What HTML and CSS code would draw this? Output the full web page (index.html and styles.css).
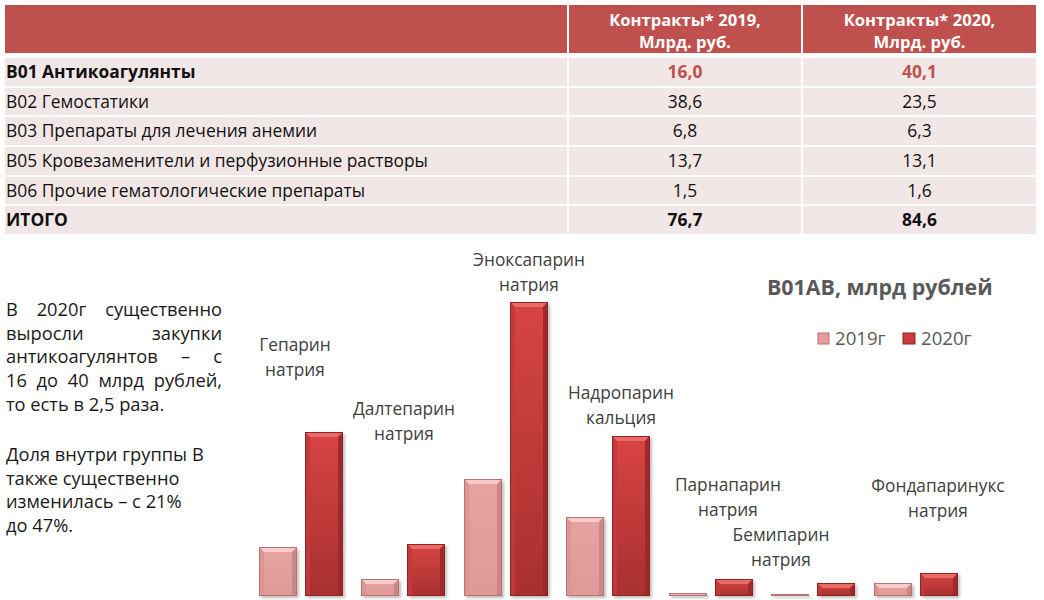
FILE: index.html
```html
<!DOCTYPE html>
<html lang="ru">
<head>
<meta charset="utf-8">
<title>B01</title>
<link rel="stylesheet" href="styles.css">
</head>
<body>
<div class="page">
  <div class="table">
    <div class="hcell"></div>
    <div class="hcell hnum">Контракты* 2019,<br>Млрд. руб.</div>
    <div class="hcell hnum">Контракты* 2020,<br>Млрд. руб.</div>

    <div class="cell name bold">B01 Антикоагулянты</div>
    <div class="cell num bold red">16,0</div>
    <div class="cell num bold red">40,1</div>

    <div class="cell name">B02 Гемостатики</div>
    <div class="cell num">38,6</div>
    <div class="cell num">23,5</div>

    <div class="cell name">B03 Препараты для лечения анемии</div>
    <div class="cell num">6,8</div>
    <div class="cell num">6,3</div>

    <div class="cell name">B05 Кровезаменители и перфузионные растворы</div>
    <div class="cell num">13,7</div>
    <div class="cell num">13,1</div>

    <div class="cell name">B06 Прочие гематологические препараты</div>
    <div class="cell num">1,5</div>
    <div class="cell num">1,6</div>

    <div class="cell name bold">ИТОГО</div>
    <div class="cell num bold">76,7</div>
    <div class="cell num bold">84,6</div>
  </div>

  <div class="lower">
    <div class="note">
      <p class="just">
        <span class="ln">В 2020г существенно</span>
        <span class="ln">выросли закупки</span>
        <span class="ln">антикоагулянтов – с</span>
        <span class="ln">16 до 40 млрд рублей,</span>
        <span class="ln last">то есть в 2,5 раза.</span>
      </p>
      <p>Доля внутри группы В<br>также существенно<br>изменилась – с 21%<br>до 47%.</p>
    </div>
    <svg class="chart" width="812" height="360" viewBox="0 0 812 360">
      <defs>
        <linearGradient id="gDark" x1="0" y1="0" x2="0" y2="1">
          <stop offset="0" stop-color="#d84444"/>
          <stop offset="1" stop-color="#a83030"/>
        </linearGradient>
        <linearGradient id="gLight" x1="0" y1="0" x2="0" y2="1">
          <stop offset="0" stop-color="#e5a3a2"/>
          <stop offset="1" stop-color="#df9998"/>
        </linearGradient>
        <filter id="sh" x="-30%" y="-10%" width="160%" height="130%">
          <feGaussianBlur stdDeviation="1.6"/>
        </filter>
      </defs>
      <g transform="translate(-232,-240)">
        <text class="title" x="767" y="295">B01AB, млрд рублей</text>

        <rect x="818" y="333" width="11" height="11" fill="#e29d9c" stroke="#b87070" stroke-width="1"/>
        <text class="legend" x="835" y="345">2019г</text>
        <rect x="903" y="333" width="12" height="11" fill="#c83c3c" stroke="#8e2424" stroke-width="1"/>
        <text class="legend" x="921" y="345">2020г</text>

        <g class="labels">
          <text x="295" y="351">Гепарин</text><text x="295" y="376">натрия</text>
          <text x="404" y="415">Далтепарин</text><text x="404" y="440">натрия</text>
          <text x="529" y="266">Эноксапарин</text><text x="529" y="291">натрия</text>
          <text x="621" y="399">Надропарин</text><text x="621" y="424">кальция</text>
          <text x="728" y="491">Парнапарин</text><text x="728" y="516">натрия</text>
          <text x="781" y="541">Бемипарин</text><text x="781" y="566">натрия</text>
          <text x="938" y="492">Фондапаринукс</text><text x="938" y="517">натрия</text>
        </g>

        <g id="bars"></g>
      </g>
    </svg>
  </div>
</div>
<script src="chart.js"></script>
</body>
</html>
```

FILE: chart.js
```js
(function () {
  var NS = "http://www.w3.org/2000/svg";
  var g = document.getElementById("bars");
  var bottom = 596;
  var bars = [
    [259, 547, 0], [305, 432, 1],
    [361, 579, 0], [407, 544, 1],
    [464, 479, 0], [510, 302, 1],
    [566, 517, 0], [612, 436, 1],
    [669, 593, 0], [715, 579, 1],
    [771, 594, 0], [817, 583, 1],
    [874, 583, 0], [920, 573, 1]
  ];
  function el(name, attrs) {
    var e = document.createElementNS(NS, name);
    for (var k in attrs) e.setAttribute(k, attrs[k]);
    g.appendChild(e);
    return e;
  }
  bars.forEach(function (b) {
    var x = b[0], y = b[1], w = 38, h = bottom - y, dark = b[2];
    var bv = Math.min(5, h / 2);
    el("rect", { x: x + 2, y: y + 2, width: w, height: h, fill: "#000", opacity: 0.25, filter: "url(#sh)" });
    el("rect", { x: x, y: y, width: w, height: h, fill: dark ? "url(#gDark)" : "url(#gLight)" });
    el("polygon", {
      points: [x, y, x + w, y, x + w - bv, y + bv, x + bv, y + bv].join(" "),
      fill: dark ? "#ea6a68" : "#f6cbca"
    });
    el("polygon", {
      points: [x, y, x + bv, y + bv, x + bv, bottom, x, bottom].join(" "),
      fill: dark ? "#c23a3a" : "#dc9493", opacity: 0.9
    });
    el("polygon", {
      points: [x + w, y, x + w - bv, y + bv, x + w - bv, bottom, x + w, bottom].join(" "),
      fill: dark ? "#9a2828" : "#c98584", opacity: 0.9
    });
    el("rect", { x: x + 0.5, y: y + 0.5, width: w - 1, height: h - 1, fill: "none",
      stroke: dark ? "#8e2424" : "#b87474", "stroke-width": 1 });
  });
})();
```

FILE: styles.css
```css
html, body {
  margin: 0;
  padding: 0;
  background: #ffffff;
}
body {
  font-family: "Open Sans", "Liberation Sans", sans-serif;
  color: #111;
  width: 1044px;
  height: 600px;
  overflow: hidden;
}
.page {
  padding: 5px 0 0 5px;
}
.table {
  display: grid;
  grid-template-columns: 562px 232px 233px;
  grid-template-rows: 51px repeat(6, 27.7px);
  column-gap: 2px;
  row-gap: 2px;
  width: 1031px;
}
.hcell {
  background: #c0504d;
  color: #fff;
  font-weight: 700;
  font-size: 16.6px;
  line-height: 22px;
  height: 48px;
  align-self: start;
}
.hnum {
  text-align: center;
  padding-top: 4px;
  box-sizing: border-box;
}
.cell {
  background: #f2e7e7;
  font-size: 17.4px;
  line-height: 27.7px;
  white-space: nowrap;
}
.name { padding-left: 1px; }
.num { text-align: center; }
.bold { font-weight: 700; }
.red { color: #c0504d; }

.lower {
  display: flex;
  margin-top: 6px;
  margin-left: -5px;
}
.note {
  width: 216px;
  margin-left: 6px;
  padding-top: 57px;
  font-size: 18.3px;
  line-height: 23.6px;
  color: #1a1a1a;
  flex: none;
}
.note p {
  margin: 0 0 27px 0;
}
.note .ln {
  display: block;
  text-align: justify;
  text-align-last: justify;
  white-space: nowrap;
}
.note .ln.last {
  text-align-last: left;
}
.chart {
  flex: none;
  margin-left: 10px;
  display: block;
}
.chart .labels text {
  font-family: "Open Sans", "Liberation Sans", sans-serif;
  font-size: 17.3px;
  fill: #404040;
  text-anchor: middle;
}
.chart .title {
  font-family: "Open Sans", "Liberation Sans", sans-serif;
  font-size: 21.4px;
  font-weight: 700;
  fill: #595959;
}
.chart .legend {
  font-family: "Open Sans", "Liberation Sans", sans-serif;
  font-size: 18.6px;
  fill: #595959;
}
```
